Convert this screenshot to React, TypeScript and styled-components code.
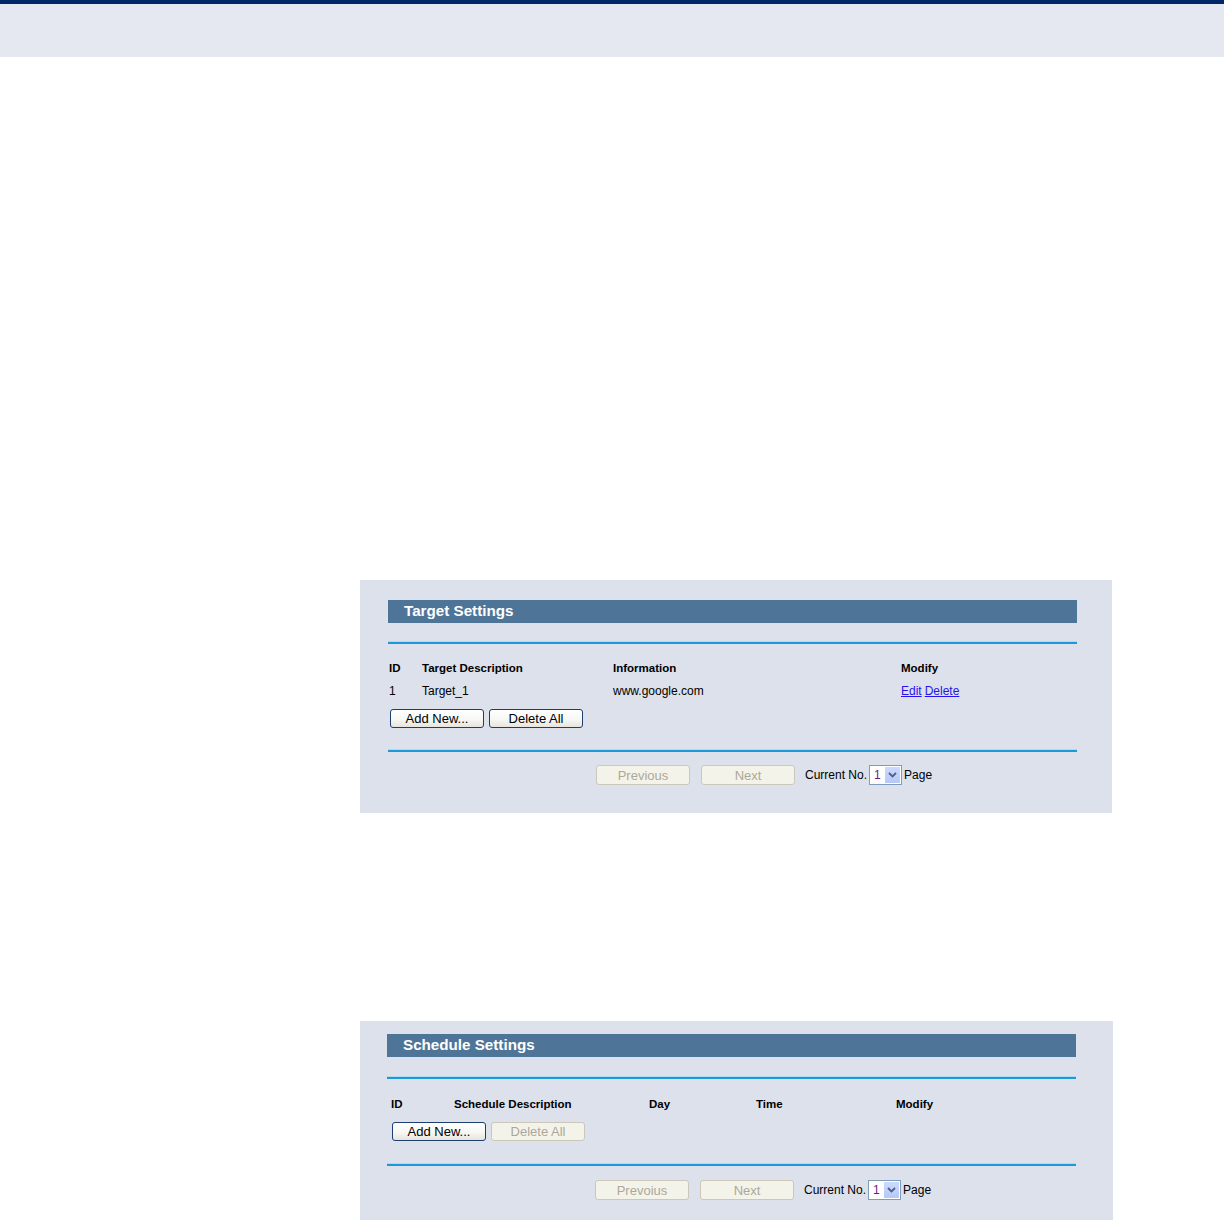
import React from "react";
import styled, { createGlobalStyle } from "styled-components";

const Global = createGlobalStyle`
  html, body { margin: 0; padding: 0; background: #ffffff; }
  body { font-family: "Liberation Sans", Arial, sans-serif; font-size: 12px; color: #000; }
`;

const TopBand = styled.div`
  height: 53px;
  background: #e5e8f1;
  border-top: 4px solid #002868;
`;

const Main = styled.main`
  display: flex;
  flex-direction: column;
  gap: 208px;
  padding: 523px 0 0 360px;
`;

const Panel = styled.section<{ $w: number; $pl: number; $pt: number }>`
  width: ${(p) => p.$w}px;
  box-sizing: border-box;
  background: #dce1ec;
  padding: ${(p) => p.$pt}px 0 28px ${(p) => p.$pl}px;
`;

const Inner = styled.div`
  width: 689px;
  display: flex;
  flex-direction: column;
`;

const TitleBar = styled.h2`
  margin: 0;
  height: 23px;
  background: #4e7598;
  color: #fff;
  font-family: "Liberation Sans", Arial, sans-serif;
  font-size: 15.2px;
  font-weight: bold;
  line-height: 22px;
  padding-left: 16px;
`;

const Rule = styled.div<{ $mt: number }>`
  margin-top: ${(p) => p.$mt}px;
  height: 2px;
  background: #1a9ad6;
  border-top: 1px solid #b4d8ee;
`;

const Grid = styled.div<{ $cols: string; $pl: number; $mt: number }>`
  display: grid;
  grid-template-columns: ${(p) => p.$cols};
  grid-auto-rows: 23px;
  align-items: center;
  padding-left: ${(p) => p.$pl}px;
  margin-top: ${(p) => p.$mt}px;
`;

const Head = styled.div`
  font-weight: bold;
  font-size: 11.5px;
  white-space: nowrap;
`;

const Cell = styled.div`
  font-size: 12px;
  white-space: nowrap;
`;

const Link = styled.a`
  color: #2a12ee;
  text-decoration: underline;
  font-size: 12px;
  margin-right: 3px;
  cursor: pointer;
`;

const ButtonRow = styled.div<{ $pl: number; $mt: number }>`
  display: flex;
  gap: 5px;
  padding-left: ${(p) => p.$pl}px;
  margin-top: ${(p) => p.$mt}px;
`;

const Btn = styled.button<{ $h?: number; $ml?: number }>`
  width: 94px;
  height: ${(p) => p.$h ?? 19}px;
  margin-left: ${(p) => p.$ml ?? 0}px;
  box-sizing: border-box;
  padding: 0;
  font-family: "Liberation Sans", Arial, sans-serif;
  font-size: 13px;
  line-height: 17px;
  color: #000;
  border: 1px solid #1c3f6e;
  border-radius: 3px;
  background: linear-gradient(#ffffff 0%, #f7f7f4 55%, #e6e4dc 100%);
  &:disabled {
    color: #aca899;
    border-color: #cbc8b9;
    background: #f4f3ea;
  }
`;

const Pager = styled.div<{ $mt: number }>`
  display: flex;
  align-items: center;
  padding-left: 208px;
  margin-top: ${(p) => p.$mt}px;
  height: 20px;
`;

const PagerLabel = styled.span<{ $ml: number }>`
  margin-left: ${(p) => p.$ml}px;
  font-size: 12px;
  white-space: nowrap;
`;

const Select = styled.div`
  margin-left: 2px;
  width: 33px;
  height: 20px;
  box-sizing: border-box;
  border: 1px solid #7f9db9;
  background: #fff;
  display: flex;
  align-items: stretch;
`;

const SelectValue = styled.span`
  flex: 1;
  padding-left: 4px;
  font-size: 12px;
  line-height: 18px;
  color: #6a1a8a;
`;

const SelectArrow = styled.span`
  width: 15px;
  margin: 1px;
  background: linear-gradient(#cbdaff, #b5c8f7);
  display: flex;
  align-items: center;
  justify-content: center;
`;

const Chevron = () => (
  <svg width="9" height="6" viewBox="0 0 9 6">
    <path d="M1 1 L4.5 4.5 L8 1" fill="none" stroke="#4d6185" strokeWidth="1.8" />
  </svg>
);

const Pagination: React.FC<{ prev: string; mt: number }> = ({ prev, mt }) => (
  <Pager $mt={mt}>
    <Btn disabled $h={20}>{prev}</Btn>
    <Btn disabled $h={20} $ml={11}>Next</Btn>
    <PagerLabel $ml={10}>Current No.</PagerLabel>
    <Select>
      <SelectValue>1</SelectValue>
      <SelectArrow>
        <Chevron />
      </SelectArrow>
    </Select>
    <PagerLabel $ml={2}>Page</PagerLabel>
  </Pager>
);

export default function App() {
  return (
    <>
      <Global />
      <TopBand />
      <Main>
        <Panel $w={752} $pl={28} $pt={20}>
          <Inner>
            <TitleBar>Target Settings</TitleBar>
            <Rule $mt={18} />
            <Grid $cols="33px 191px 288px 1fr" $pl={1} $mt={12}>
              <Head>ID</Head>
              <Head>Target Description</Head>
              <Head>Information</Head>
              <Head>Modify</Head>
              <Cell>1</Cell>
              <Cell>Target_1</Cell>
              <Cell>www.google.com</Cell>
              <Cell>
                <Link>Edit</Link>
                <Link>Delete</Link>
              </Cell>
            </Grid>
            <ButtonRow $pl={2} $mt={7}>
              <Btn>Add New...</Btn>
              <Btn>Delete All</Btn>
            </ButtonRow>
            <Rule $mt={21} />
            <Pagination prev="Previous" mt={13} />
          </Inner>
        </Panel>
        <Panel $w={753} $pl={27} $pt={13}>
          <Inner>
            <TitleBar>Schedule Settings</TitleBar>
            <Rule $mt={19} />
            <Grid $cols="63px 195px 107px 140px 1fr" $pl={4} $mt={13}>
              <Head>ID</Head>
              <Head>Schedule Description</Head>
              <Head>Day</Head>
              <Head>Time</Head>
              <Head>Modify</Head>
            </Grid>
            <ButtonRow $pl={5} $mt={7}>
              <Btn>Add New...</Btn>
              <Btn disabled>Delete All</Btn>
            </ButtonRow>
            <Rule $mt={22} />
            <Pagination prev="Prevoius" mt={14} />
          </Inner>
        </Panel>
      </Main>
    </>
  );
}
